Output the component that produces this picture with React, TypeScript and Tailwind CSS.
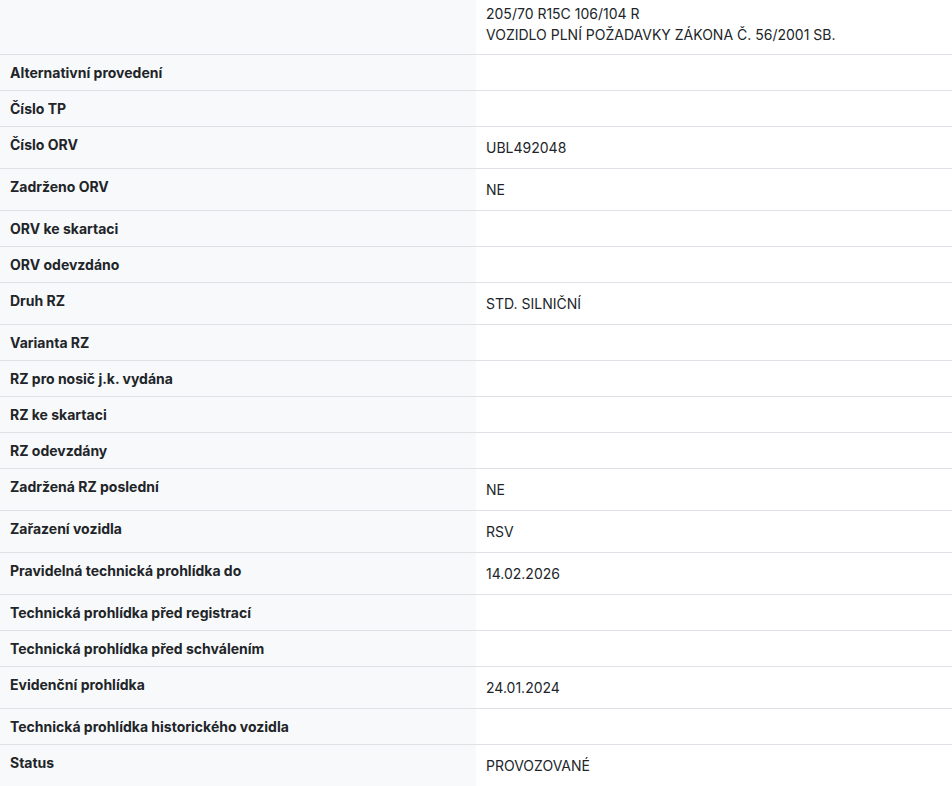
const rows: { label: string; value?: string }[] = [
  { label: 'Alternativní provedení' },
  { label: 'Číslo TP' },
  { label: 'Číslo ORV', value: 'UBL492048' },
  { label: 'Zadrženo ORV', value: 'NE' },
  { label: 'ORV ke skartaci' },
  { label: 'ORV odevzdáno' },
  { label: 'Druh RZ', value: 'STD. SILNIČNÍ' },
  { label: 'Varianta RZ' },
  { label: 'RZ pro nosič j.k. vydána' },
  { label: 'RZ ke skartaci' },
  { label: 'RZ odevzdány' },
  { label: 'Zadržená RZ poslední', value: 'NE' },
  { label: 'Zařazení vozidla', value: 'RSV' },
  { label: 'Pravidelná technická prohlídka do', value: '14.02.2026' },
  { label: 'Technická prohlídka před registrací' },
  { label: 'Technická prohlídka před schválením' },
  { label: 'Evidenční prohlídka', value: '24.01.2024' },
  { label: 'Technická prohlídka historického vozidla' },
  { label: 'Status', value: 'PROVOZOVANÉ' },
];

export default function App() {
  return (
    <div className="h-[786px] overflow-hidden bg-white text-[#212529] font-['Inter',sans-serif]">
      <div className="flex h-[54px]">
        <div className="w-1/2 bg-[#f8f9fa]" />
        <div className="w-1/2 flex flex-col justify-end px-2.5 pb-[9px] text-sm leading-[21px]">
          <div>205/70 R15C 106/104 R</div>
          <div>VOZIDLO PLNÍ POŽADAVKY ZÁKONA Č. 56/2001 SB.</div>
        </div>
      </div>
      {rows.map((r) => (
        <div key={r.label} className="flex border-t border-[#dee2e6]">
          <div className="w-1/2 bg-[#f8f9fa] px-2.5 pt-2 pb-[7px] text-sm leading-5 font-bold">
            {r.label}
          </div>
          <div className="w-1/2 px-2.5 py-2.5 text-sm leading-[21px]">{r.value}</div>
        </div>
      ))}
    </div>
  );
}
